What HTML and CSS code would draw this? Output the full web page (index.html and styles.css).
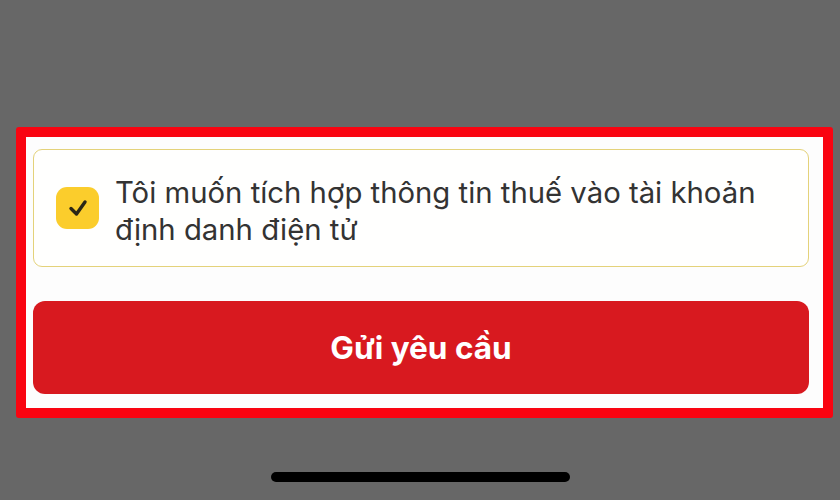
FILE: index.html
```html
<!DOCTYPE html>
<html lang="vi">
<head>
  <meta charset="UTF-8">
  <meta name="viewport" content="width=device-width, initial-scale=1">
  <title>Gửi yêu cầu</title>
  <link rel="stylesheet" href="styles.css">
</head>
<body>

<div class="screen">
  <div class="highlight">
    <label class="consent">
      <span class="checkbox">
        <svg width="43" height="42" viewBox="0 0 43 42">
          <path d="M15 21.5 L20.5 27 L29 15" fill="none" stroke="#2b2616" stroke-width="3.4" stroke-linecap="round" stroke-linejoin="round"/>
        </svg>
      </span>
      <span class="consent-text">Tôi muốn tích hợp thông tin thuế vào tài khoản định danh điện tử</span>
    </label>

    <button class="submit">Gửi yêu cầu</button>
  </div>

  <div class="home-bar"></div>
</div>

</body>
</html>
```

FILE: styles.css
```css
body {
  margin: 0;
  background: #676767;
  font-family: Inter, 'Noto Sans', sans-serif;
}
.screen {
  width: 840px;
  height: 500px;
  padding-top: 127px;
  box-sizing: border-box;
}
.highlight {
  width: 817px;
  margin-left: 16px;
  box-sizing: border-box;
  border: 10px solid #f90411;
  border-radius: 3px;
  background: #fdfdfd;
  padding: 12px 14px 14px 7px;
}
.consent {
  display: flex;
  align-items: flex-start;
  height: 118px;
  box-sizing: border-box;
  border: 1.5px solid #e4d27a;
  border-radius: 9px;
  padding: 24px 20px 0 22px;
  background: #fffffe;
}
.checkbox {
  flex: none;
  width: 43px;
  height: 42px;
  margin-top: 13px;
  background: #fbcd2c;
  border-radius: 11px;
}
.checkbox svg {
  display: block;
}
.consent-text {
  max-width: 660px;
  margin-left: 16px;
  font-size: 29.3px;
  line-height: 37px;
  color: #333;
}
.submit {
  display: block;
  width: 100%;
  height: 93px;
  margin-top: 34px;
  border: none;
  border-radius: 12px;
  background: #d8191f;
  color: #fff;
  font-family: inherit;
  font-size: 31.5px;
  font-weight: 700;
}
.home-bar {
  width: 299px;
  height: 10px;
  margin: 54px auto 0;
  border-radius: 5px;
  background: #000;
}
```
